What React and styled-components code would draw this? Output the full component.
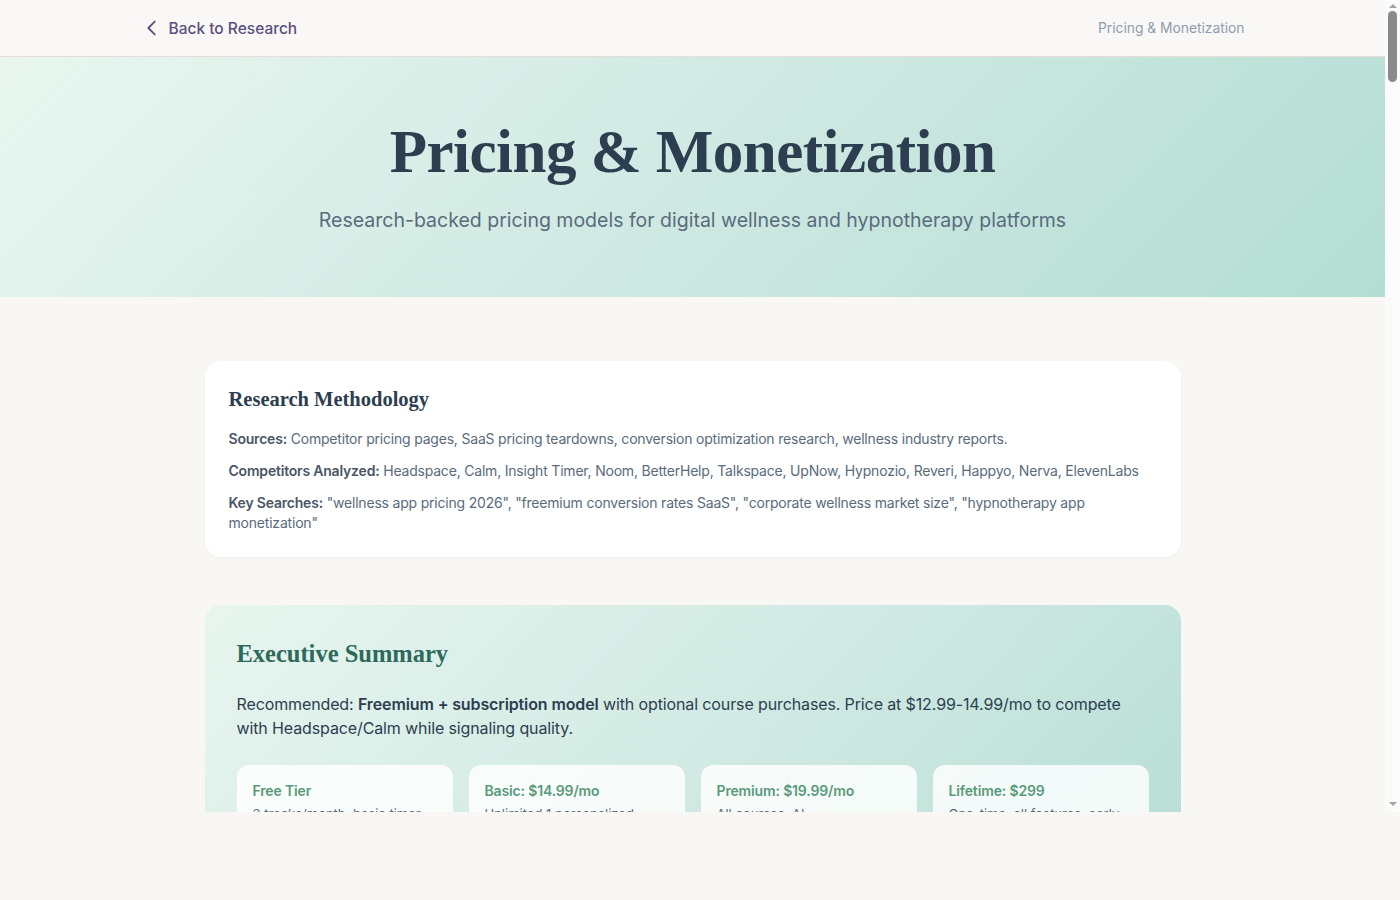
import React from 'react'
import styled, { createGlobalStyle } from 'styled-components'

const GlobalStyle = createGlobalStyle`
  html, body {
    margin: 0;
    padding: 0;
    background: #f9f7f4;
    font-family: Inter, "Noto Sans", sans-serif;
  }
  * { box-sizing: border-box; }
`

const Frame = styled.div`
  position: relative;
  height: 812px;
`

const Viewport = styled.div`
  width: calc(100% - 15px);
  height: 100%;
  overflow-y: auto;
  background: #f9f7f4;
  scrollbar-width: none;
  &::-webkit-scrollbar { display: none; }
`

const ScrollRail = styled.div`
  position: absolute;
  top: 0;
  right: 0;
  width: 15px;
  height: 100%;
  background: #fbfbfb;
  display: flex;
  flex-direction: column;
  align-items: center;
  justify-content: space-between;
  padding: 4px 0 6px;
`

const RailArrow = styled.span`
  width: 0;
  height: 0;
  border-left: 4px solid transparent;
  border-right: 4px solid transparent;
  ${p => (p.$down ? 'border-top: 4px solid #a3a3a3;' : 'border-bottom: 4px solid #a3a3a3;')}
`

const RailTrack = styled.div`
  flex: 1;
  width: 100%;
  display: flex;
  justify-content: center;
  padding-top: 3px;
`

const RailThumb = styled.div`
  width: 9px;
  height: 71px;
  border-radius: 5px;
  background: #8a8a8a;
`

const TopBar = styled.header`
  height: 57px;
  background: #faf8f6;
  border-bottom: 1px solid #e8ddd6;
`

const TopInner = styled.div`
  max-width: 1104px;
  height: 100%;
  margin: 0 auto;
  display: flex;
  align-items: center;
  justify-content: space-between;
`

const BackLink = styled.a`
  display: flex;
  align-items: center;
  gap: 6px;
  color: #5b4f80;
  font-size: 15.5px;
  font-weight: 500;
  text-decoration: none;
`

const Crumb = styled.span`
  color: #8c9bb0;
  font-size: 13.8px;
`

const Hero = styled.section`
  height: 240px;
  background: linear-gradient(135deg, #e9f6f0 0%, #cfe9e2 50%, #b3ddd3 100%);
  display: flex;
  flex-direction: column;
  align-items: center;
  padding-top: 58px;
`

const HeroTitle = styled.h1`
  margin: 0;
  font-family: "Liberation Serif", "DejaVu Serif", serif;
  font-weight: 700;
  font-size: 61px;
  line-height: 74px;
  color: #2c3e50;
  letter-spacing: -0.5px;
`

const HeroSub = styled.p`
  margin: 19px 0 0;
  font-size: 19.5px;
  color: #5a6b7d;
`

const Main = styled.main`
  max-width: 976px;
  margin: 0 auto;
  padding: 64px 0 80px;
  display: flex;
  flex-direction: column;
  gap: 48px;
`

const Card = styled.section`
  background: #ffffff;
  border-radius: 16px;
  padding: 24px;
  box-shadow: 0 1px 3px rgba(44, 62, 80, 0.04);
`

const CardTitle = styled.h2`
  margin: 0 0 16px;
  font-family: "Liberation Serif", "DejaVu Serif", serif;
  font-weight: 700;
  font-size: 20.5px;
  line-height: 28px;
  color: #2c3e50;
`

const Line = styled.p`
  margin: 0 0 12px;
  font-size: 14px;
  line-height: 20px;
  letter-spacing: -0.2px;
  color: #5a6b7d;
  &:last-child { margin-bottom: 0; }
  strong { color: #4a5568; font-weight: 600; }
`

const Summary = styled.section`
  background: linear-gradient(135deg, #e8f5ef 0%, #cfe9e2 55%, #b5ddd4 100%);
  border-radius: 16px;
  padding: 32px;
`

const SummaryTitle = styled.h2`
  margin: 0 0 21px;
  font-family: "Liberation Serif", "DejaVu Serif", serif;
  font-weight: 700;
  font-size: 24.5px;
  line-height: 34px;
  color: #2d6a5a;
`

const SummaryText = styled.p`
  margin: 0 0 25px;
  font-size: 16px;
  line-height: 24px;
  letter-spacing: -0.12px;
  color: #2c3e50;
  strong { font-weight: 600; }
`

const TierGrid = styled.div`
  display: grid;
  grid-template-columns: repeat(4, 1fr);
  gap: 16px;
`

const Tier = styled.div`
  background: rgba(255, 255, 255, 0.82);
  border-radius: 12px;
  padding: 16px;
`

const TierName = styled.div`
  font-size: 14px;
  line-height: 20px;
  font-weight: 600;
  letter-spacing: -0.15px;
  color: #5a9a7a;
  margin-bottom: 4px;
`

const TierText = styled.div`
  font-size: 13px;
  line-height: 19px;
  color: #5a6b7d;
`

const Table = styled.table`
  width: 100%;
  border-collapse: collapse;
  font-size: 14px;
  color: #4a5568;
  th, td { text-align: left; padding: 10px 8px; border-bottom: 1px solid #eee8e2; }
  th { color: #2c3e50; font-weight: 600; }
`

const ChevronLeft = () => (
  <svg width="22" height="22" viewBox="0 0 24 24" fill="none" stroke="currentColor" strokeWidth="2" strokeLinecap="round" strokeLinejoin="round">
    <path d="M15 5l-7 7 7 7" />
  </svg>
)

const tiers = [
  { name: 'Free Tier', text: '3 tracks/month, basic timer, limited library' },
  { name: 'Basic: $14.99/mo', text: 'Unlimited 1 personalized session per day, full library' },
  { name: 'Premium: $19.99/mo', text: 'All courses, AI personalization, offline downloads' },
  { name: 'Lifetime: $299', text: 'One-time, all features, early access to new content' },
]

const competitors = [
  ['Headspace', '$12.99/mo', '$69.99/yr', 'Freemium + trial'],
  ['Calm', '$14.99/mo', '$69.99/yr', 'Trial + subscription'],
  ['Insight Timer', '$9.99/mo', '$59.99/yr', 'Free + premium'],
  ['Noom', '$70/mo', '$209/yr', 'Program-based'],
  ['BetterHelp', '$65–100/wk', '—', 'Weekly billing'],
  ['Talkspace', '$69–109/wk', '—', 'Insurance + direct'],
  ['UpNow', '$9.99/mo', '$49.99/yr', 'Subscription'],
  ['Hypnozio', '$29.99/mo', '$99/yr', 'Paywall onboarding'],
  ['Reveri', '$9.99/mo', '$59.99/yr', 'Trial + subscription'],
  ['Nerva', '$69.99 one-time', '—', 'Program purchase'],
]

export default function App() {
  return (
    <>
      <GlobalStyle />
      <Frame>
        <Viewport>
          <TopBar>
            <TopInner>
              <BackLink href="#">
                <ChevronLeft />
                Back to Research
              </BackLink>
              <Crumb>Pricing &amp; Monetization</Crumb>
            </TopInner>
          </TopBar>
          <Hero>
            <HeroTitle>Pricing &amp; Monetization</HeroTitle>
            <HeroSub>Research-backed pricing models for digital wellness and hypnotherapy platforms</HeroSub>
          </Hero>
          <Main>
            <Card>
              <CardTitle>Research Methodology</CardTitle>
              <Line><strong>Sources:</strong> Competitor pricing pages, SaaS pricing teardowns, conversion optimization research, wellness industry reports.</Line>
              <Line><strong>Competitors Analyzed:</strong> Headspace, Calm, Insight Timer, Noom, BetterHelp, Talkspace, UpNow, Hypnozio, Reveri, Happyo, Nerva, ElevenLabs</Line>
              <Line><strong>Key Searches:</strong> "wellness app pricing 2026", "freemium conversion rates SaaS", "corporate wellness market size", "hypnotherapy app monetization"</Line>
            </Card>
            <Summary>
              <SummaryTitle>Executive Summary</SummaryTitle>
              <SummaryText>
                Recommended: <strong>Freemium + subscription model</strong> with optional course purchases. Price at $12.99-14.99/mo to compete with Headspace/Calm while signaling quality.
              </SummaryText>
              <TierGrid>
                {tiers.map(t => (
                  <Tier key={t.name}>
                    <TierName>{t.name}</TierName>
                    <TierText>{t.text}</TierText>
                  </Tier>
                ))}
              </TierGrid>
            </Summary>
            <Card>
              <CardTitle>Competitor Pricing</CardTitle>
              <Table>
                <thead>
                  <tr><th>Platform</th><th>Monthly</th><th>Annual</th><th>Model</th></tr>
                </thead>
                <tbody>
                  {competitors.map(r => (
                    <tr key={r[0]}>{r.map((c, i) => <td key={i}>{c}</td>)}</tr>
                  ))}
                </tbody>
              </Table>
            </Card>
            <Card>
              <CardTitle>Conversion Benchmarks</CardTitle>
              <Line><strong>Freemium to paid:</strong> 2–5% typical for consumer wellness apps; top performers reach 8–10% with strong onboarding.</Line>
              <Line><strong>Free trial to paid:</strong> 25–40% for opt-out trials, 10–15% for opt-in trials.</Line>
              <Line><strong>Annual plan share:</strong> 60–70% of subscribers choose annual when offered a 40%+ discount.</Line>
            </Card>
            <Card>
              <CardTitle>Corporate Wellness Opportunity</CardTitle>
              <Line><strong>Market size:</strong> Corporate wellness is a large and growing segment, with B2B seat licensing commonly priced per employee per month.</Line>
              <Line><strong>Recommendation:</strong> Launch a team plan after reaching product-market fit with consumers.</Line>
            </Card>
          </Main>
        </Viewport>
        <ScrollRail aria-hidden="true">
          <RailArrow />
          <RailTrack>
            <RailThumb />
          </RailTrack>
          <RailArrow $down />
        </ScrollRail>
      </Frame>
    </>
  )
}
